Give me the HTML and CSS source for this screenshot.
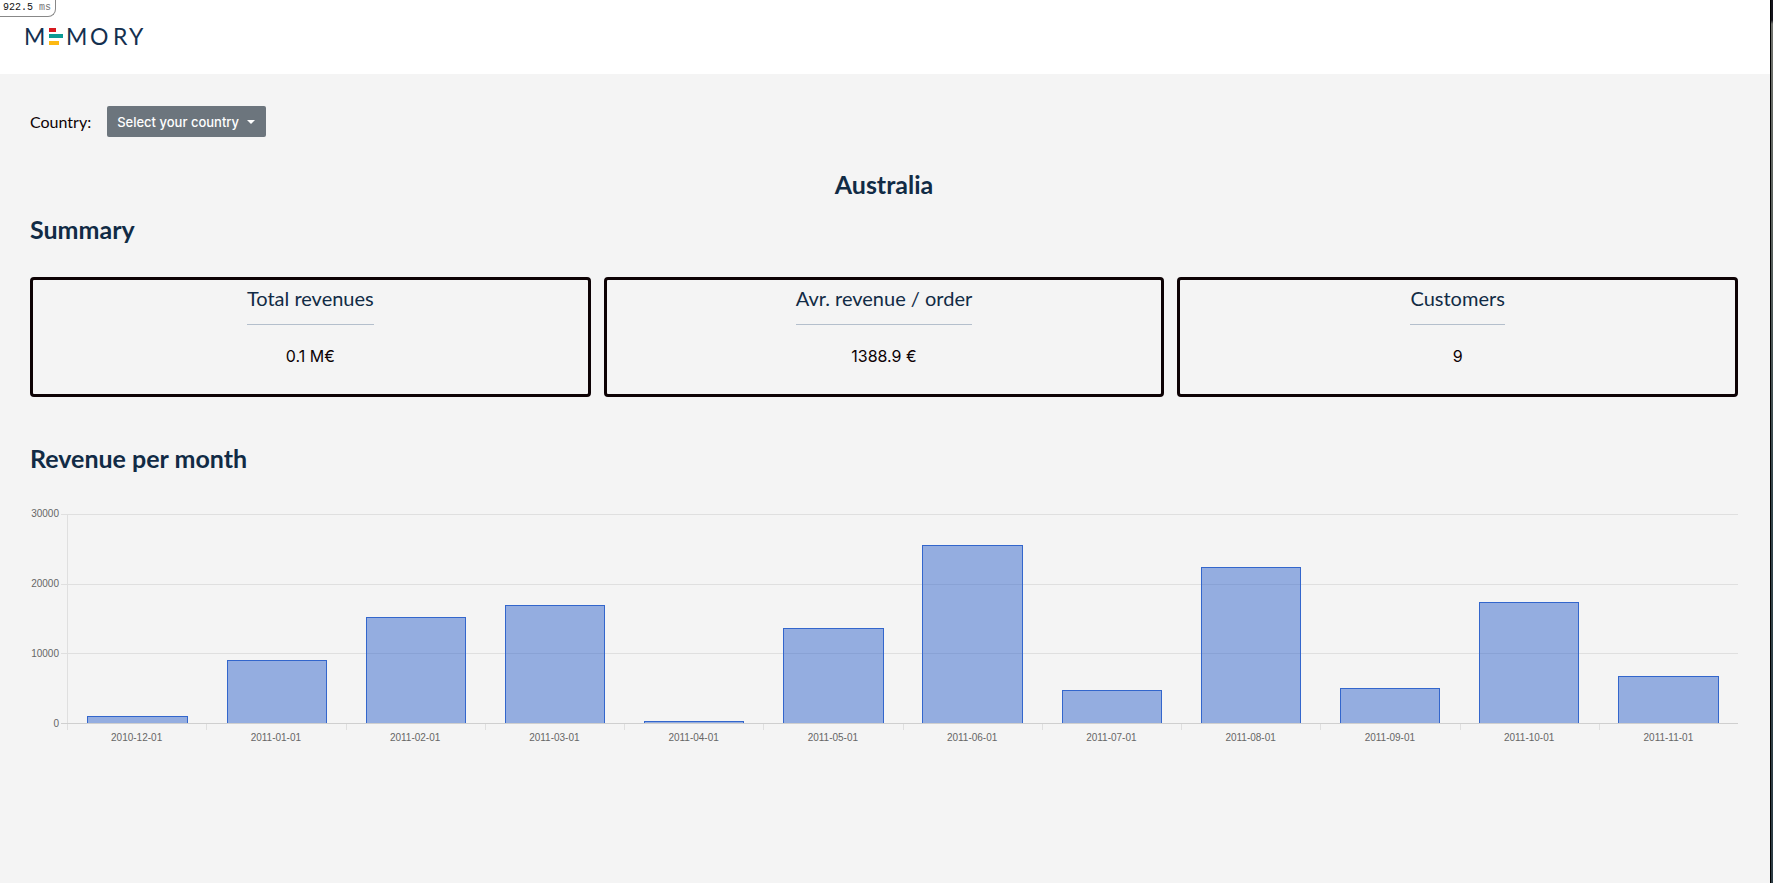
FILE: index.html
```html
<!DOCTYPE html>
<html lang="en">
<head>
<meta charset="utf-8">
<title>Memory – Australia</title>
<link rel="stylesheet" href="styles.css">
</head>
<body>
<div class="page">
  <div class="timing">922.5 <span class="timing-unit">ms</span></div>
  <header class="header">
    <a href="#" class="logo" aria-label="Memory">
      <svg width="128" height="36" viewBox="-2 -4 128 36">
        <text class="logo-text" y="20" x="-1">M</text>
        <rect x="24" y="3" width="7" height="4" fill="#d7191f"/>
        <rect x="24" y="9" width="14" height="4" fill="#0b9a94"/>
        <rect x="24" y="16" width="10" height="4" fill="#fdb913"/>
        <text class="logo-text" y="20" x="41 65 88 104">MORY</text>
      </svg>
    </a>
  </header>
  <main class="content">
    <form class="filter">
      <label for="country">Country:</label>
      <div class="picker">
        <select id="country"><option>Select your country</option><option>Australia</option></select>
        <span class="caret"></span>
      </div>
    </form>
    <h2 class="title country-name">Australia</h2>
    <h2 class="title">Summary</h2>
    <section class="cards">
      <article class="card"><h3>Total revenues</h3><p>0.1 M€</p></article>
      <article class="card"><h3>Avr. revenue / order</h3><p>1388.9 €</p></article>
      <article class="card"><h3>Customers</h3><p>9</p></article>
    </section>
    <h2 class="title">Revenue per month</h2>
    <section class="chart">
      <div class="scale"><span>30000</span><span>20000</span><span>10000</span><span>0</span></div>
      <div class="plot">
        <div class="lines"><i></i><i></i><i></i></div>
        <div class="bars">
          <div class="bar" style="height:3.4%"></div>
          <div class="bar" style="height:30.2%"></div>
          <div class="bar" style="height:51.2%"></div>
          <div class="bar" style="height:56.9%"></div>
          <div class="bar" style="height:1%"></div>
          <div class="bar" style="height:45.5%"></div>
          <div class="bar" style="height:85.6%"></div>
          <div class="bar" style="height:15.9%"></div>
          <div class="bar" style="height:75.2%"></div>
          <div class="bar" style="height:16.7%"></div>
          <div class="bar" style="height:58.4%"></div>
          <div class="bar" style="height:22.8%"></div>
        </div>
      </div>
      <div class="months">
        <span>2010-12-01</span><span>2011-01-01</span><span>2011-02-01</span><span>2011-03-01</span><span>2011-04-01</span><span>2011-05-01</span><span>2011-06-01</span><span>2011-07-01</span><span>2011-08-01</span><span>2011-09-01</span><span>2011-10-01</span><span>2011-11-01</span>
      </div>
    </section>
  </main>
</div>
</body>
</html>
```
FILE: styles.css
```css
* { box-sizing: border-box; }
body {
  margin: 0;
  padding-right: 2px;
  background: linear-gradient(#14141c 20px, #6f716c 24px, #5c635f 220px, #34454b 500px, #2d3c44);
  color: #0d0204;
  font-family: Lato, sans-serif;
}
.page {
  min-height: 100vh;
  background: #f4f4f4;
  border-right: 1px solid #000;
}
.timing {
  position: absolute;
  top: 0;
  left: 0;
  padding: 0 4px 0 3px;
  border: solid #888;
  border-width: 0 1px 1px 0;
  border-radius: 0 0 8px 0;
  background: #fff;
  color: #111;
  font: 10px/16px "Liberation Mono", monospace;
}
.timing-unit { color: #777; }
.header {
  height: 74px;
  padding: 21px 23px 0;
  background: #fff;
}
.logo { display: inline-block; }
.logo svg { display: block; }
.logo-text {
  font-family: Lato, sans-serif;
  font-size: 23px;
  fill: #14304f;
}
.content { padding: 32px 32px 0 30px; }
.filter {
  display: flex;
  align-items: center;
  gap: 16px;
  margin-bottom: 31px;
  font-size: 16px;
}
.picker { display: grid; align-items: center; }
.picker select {
  grid-area: 1 / 1;
  height: 31px;
  padding: 0 27px 0 10px;
  appearance: none;
  border: 0;
  border-radius: 2px;
  background: #6c757d;
  color: #fff;
  font: 500 13px/20px Inter, sans-serif;
}
.caret {
  grid-area: 1 / 1;
  justify-self: end;
  margin-right: 11px;
  border: 4px solid transparent;
  border-top-color: #fff;
  border-bottom: 0;
  pointer-events: none;
}
.title {
  margin: 0;
  color: #112b45;
  font-size: 25px;
  font-weight: 700;
  line-height: 32px;
}
.country-name { margin-bottom: 13px; text-align: center; }
.cards {
  display: grid;
  grid-template-columns: repeat(3, 1fr);
  gap: 13px;
  margin: 32px 0 45px;
}
.card {
  display: flex;
  flex-direction: column;
  align-items: center;
  height: 120px;
  border: 3px solid #0d0204;
  border-radius: 4px;
}
.card h3 {
  margin: 0;
  padding: 5px 0 13px;
  border-bottom: 1px solid #b4bfcc;
  color: #112b45;
  font-size: 20px;
  font-weight: 400;
  line-height: 26px;
}
.card p {
  margin: 19px 0 0;
  font: 16px/24px Inter, sans-serif;
}
.chart {
  display: grid;
  grid-template-columns: 37px 1fr;
  margin-top: 40px;
  color: #666;
  font: 10px/12px "Liberation Sans", Arial, sans-serif;
}
.scale {
  display: flex;
  flex-direction: column;
  justify-content: space-between;
  margin: -6px 0;
  padding-right: 8px;
  text-align: right;
}
.plot {
  display: grid;
  height: 210px;
  margin-left: -6px;
}
.lines {
  grid-area: 1 / 1;
  display: grid;
  grid-template-rows: repeat(3, 1fr);
  border-bottom: 1px solid #cfcfcf;
  background: linear-gradient(#dfdfdf, #dfdfdf) 6px 0 / 1px 100% no-repeat;
}
.lines i { border-top: 1px solid #dfdfdf; }
.bars {
  grid-area: 1 / 1;
  display: grid;
  grid-template-columns: repeat(12, 1fr);
  align-items: end;
  margin: 1px 0 1px 7px;
}
.bar {
  margin: 0 14%;
  border: 1px solid #3366cc;
  border-bottom: 0;
  background: rgba(51, 102, 204, 0.5);
}
.months {
  grid-column: 2;
  display: grid;
  grid-template-columns: repeat(12, 1fr);
  text-align: center;
}
.months span {
  padding-top: 8px;
  background: linear-gradient(#dfdfdf, #dfdfdf) 0 0 / 1px 6px no-repeat;
}
```
